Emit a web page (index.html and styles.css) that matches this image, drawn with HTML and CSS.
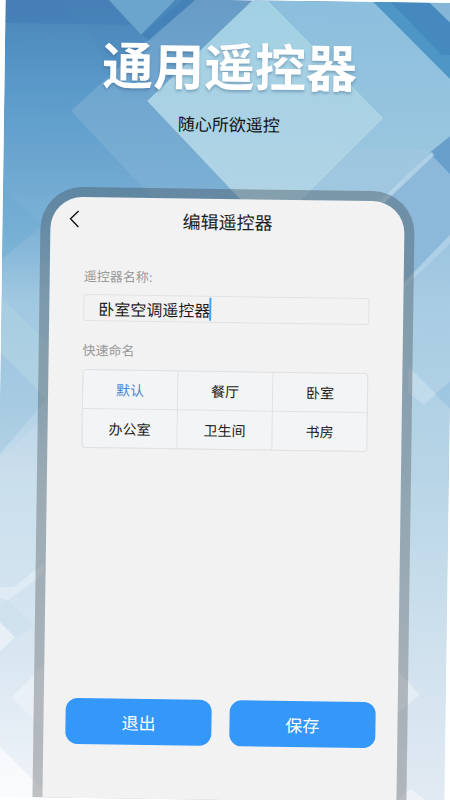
FILE: index.html
```
<!DOCTYPE html>
<html lang="zh-CN">

<head>
    <meta charset="UTF-8">
    <meta name="viewport" content="width=device-width, initial-scale=1.0">
    <title>通用遥控器</title>
    <link rel="stylesheet" href="styles.css">
</head>

<body>
    <div class="poster">
        <svg class="backdrop" viewBox="0 0 450 800" preserveAspectRatio="xMidYMid slice" aria-hidden="true">
            <defs>
                <linearGradient id="sky" x1="0" y1="0" x2="0" y2="1">
                    <stop offset="0" stop-color="#4a84b8" />
                    <stop offset="0.12" stop-color="#5b9bca" />
                    <stop offset="0.28" stop-color="#7ab0d5" />
                    <stop offset="0.38" stop-color="#a0c8e1" />
                    <stop offset="0.5" stop-color="#aed0e5" />
                    <stop offset="0.6" stop-color="#c9dfec" />
                    <stop offset="0.82" stop-color="#d8e6f1" />
                    <stop offset="1" stop-color="#f1f4f9" />
                </linearGradient>
                <linearGradient id="rightSky" x1="0" y1="0" x2="0" y2="1">
                    <stop offset="0" stop-color="#93bfdc" />
                    <stop offset="0.2" stop-color="#a8cce3" />
                    <stop offset="0.45" stop-color="#b6d4e6" />
                    <stop offset="0.75" stop-color="#cfe1ed" />
                    <stop offset="1" stop-color="#e2eaf3" />
                </linearGradient>
                <linearGradient id="diamond" x1="0" y1="0" x2="0" y2="1">
                    <stop offset="0" stop-color="#a2d0e3" />
                    <stop offset="1" stop-color="#b1d4e6" />
                </linearGradient>
                <linearGradient id="band" x1="0" y1="0" x2="0" y2="1">
                    <stop offset="0" stop-color="#8bbfdd" />
                    <stop offset="1" stop-color="#9fc8df" />
                </linearGradient>
            </defs>
            <rect width="450" height="800" fill="url(#sky)" />
            <rect x="376" y="180" width="74" height="620" fill="url(#rightSky)" />
            <!-- top left -->
            <path d="M0 0H100L134 34L128 26H0Z" fill="#3b73ae" opacity=".4" />
            <path d="M52 0H102L136 36L148 100H120L86 36Z" fill="#4a86ba" opacity=".25" />
            <path d="M102 0H178L136 36Z" fill="#6ba5cd" />
            <path d="M170 0H190L145 42L136 36Z" fill="#427fb6" opacity=".8" />
            <!-- diamonds -->
            <path d="M190 0H247L143 102L246 208H158L67 113L145 40Z" fill="#85b4d6" opacity=".5" />
            <path d="M263 0H368L450 80V136L374 208H290L380 116Z" fill="url(#band)" />
            <path d="M247 0H263L380 116L290 208H246L143 102Z" fill="url(#diamond)" />
            <path d="M350 147L439 147L374 208H290Z" fill="#a6c8e0" opacity=".4" />
            <path d="M368 0H450V80Z" fill="#4d96c6" />
            <path d="M385 0H424L450 26V52L437 52Z" fill="#4586bb" opacity=".8" />
            <path d="M424 0H450V24Z" fill="#85b6d7" />
            <path d="M426 150L450 130V176Z" fill="#699fcb" />
            <path d="M374 208L426 150L450 174V230L400 284L376 250Z" fill="#8cb9da" />
            <path d="M370 206L428 149L431 152L376 206Z" fill="#c5dfef" opacity=".6" />
            <path d="M398 284L450 229V238L398 290Z" fill="#b9d7e9" opacity=".6" />
            <!-- side facets -->
            <path d="M0 192L40 228L0 262Z" fill="#6aaad0" opacity=".4" />
            <path d="M0 300L46 345V400L0 355Z" fill="#b4d4e2" opacity=".4" />
            <path d="M0 356L46 402L0 458Z" fill="#98c1dd" opacity=".4" />
            <path d="M0 462L40 424V480H0Z" fill="#cfdfed" opacity=".3" />
            <path d="M408 364L436 391L424 402L408 390Z" fill="#c8dfed" opacity=".7" />
            <path d="M450 378L435 391L450 405Z" fill="#95c0dd" opacity=".6" />
            <path d="M400 408L450 458V480H400Z" fill="#b6d4e6" opacity=".3" />
            <path d="M0 590H16L46 566V576L10 604L0 600Z" fill="#e6f0f6" opacity=".6" />
            <path d="M10 602L38 630L0 650V612Z" fill="#c8dcea" opacity=".35" />
            <path d="M0 622L18 640L4 654H0Z" fill="#edf3f8" opacity=".8" />
            <path d="M16 700L60 655V744Z" fill="#f0f4fa" opacity=".6" />
            <path d="M0 745L56 800H0Z" fill="#fff" opacity=".6" />
            <path d="M400 667L424 692L400 712Z" fill="#edf3f8" opacity=".6" />
            <path d="M400 800L416 786L434 800Z" fill="#fff" opacity=".4" />
        </svg>

        <header class="intro">
            <h1>通用遥控器</h1>
            <p>随心所欲遥控</p>
        </header>

        <main class="phone">
            <div class="screen">
                <div class="topbar">
                    <button class="back" type="button" aria-label="返回">
                        <svg width="12" height="20" viewBox="0 0 12 20" aria-hidden="true">
                            <path d="M10 2L2 10L10 18" />
                        </svg>
                    </button>
                    <h2>编辑遥控器</h2>
                </div>

                <form class="editor">
                    <label for="remoteName">遥控器名称:</label>
                    <div class="field">
                        <input id="remoteName" type="text" value="卧室空调遥控器">
                        <span class="caret"></span>
                    </div>

                    <p class="caption" id="quickLabel">快速命名</p>
                    <div class="names" role="group" aria-labelledby="quickLabel">
                        <button class="name selected" type="button">默认</button>
                        <button class="name" type="button">餐厅</button>
                        <button class="name" type="button">卧室</button>
                        <button class="name" type="button">办公室</button>
                        <button class="name" type="button">卫生间</button>
                        <button class="name" type="button">书房</button>
                    </div>
                </form>

                <div class="actions">
                    <button class="action" type="button">退出</button>
                    <button class="action" type="button">保存</button>
                </div>
            </div>
        </main>
    </div>

    <script>
        const nameInput = document.getElementById('remoteName');
        const nameButtons = document.querySelectorAll('.name');

        nameButtons.forEach(button => {
            button.addEventListener('click', () => {
                nameButtons.forEach(other => other.classList.remove('selected'));
                button.classList.add('selected');
                nameInput.value = button.textContent + '空调遥控器';
            });
        });
    </script>
</body>

</html>
```
FILE: styles.css
```
* {
    box-sizing: border-box;
}

body {
    margin: 0;
    background-color: #fff;
    font-family: "Noto Sans CJK SC", "Noto Sans", sans-serif;
    color: #1c1c1c;
    overflow: hidden;
}

h1,
h2,
p {
    margin: 0;
}

button,
input {
    font: inherit;
    color: inherit;
    margin: 0;
    padding: 0;
    border: none;
    background: none;
}

button {
    cursor: pointer;
}

.poster {
    position: relative;
    display: flex;
    flex-direction: column;
    min-height: 100vh;
    overflow: hidden;
    transform: rotate(0.8deg);
}

.backdrop {
    position: absolute;
    width: 100%;
    height: 100%;
}

.intro {
    position: relative;
    padding-top: 34px;
    text-align: center;
}

.intro h1 {
    font-size: 51px;
    line-height: 60px;
    font-weight: 700;
    color: #fff;
    text-shadow: 0 2px 3px rgba(50, 90, 130, 0.4);
}

.intro p {
    margin-top: 17px;
    font-size: 17px;
    line-height: 26px;
    color: #111;
}

.phone {
    position: relative;
    flex: 1;
    display: flex;
    margin: 52px 38px 0;
    padding: 10px 10px 0;
    border-radius: 42px 42px 0 0;
    background: linear-gradient(rgba(70, 85, 95, 0.42), rgba(105, 105, 105, 0.4));
}

.screen {
    flex: 1;
    display: flex;
    flex-direction: column;
    border-radius: 32px 32px 0 0;
    background-color: #f2f2f2;
}

.topbar {
    display: grid;
    grid-template-columns: 48px 1fr 48px;
    align-items: center;
    height: 44px;
}

.topbar h2 {
    font-size: 18px;
    line-height: 24px;
    font-weight: 400;
    text-align: center;
}

.back {
    display: flex;
    justify-content: center;
}

.back svg {
    fill: none;
    stroke: #111;
    stroke-width: 1.4;
}

.editor {
    padding: 25px 34px 0;
}

.editor label,
.caption {
    display: block;
    font-size: 13px;
    line-height: 20px;
    color: #999;
}

.field {
    position: relative;
    margin-top: 8px;
    font-size: 16px;
}

.field input {
    display: block;
    width: 100%;
    height: 27px;
    padding: 0 14px;
    border: 1px solid #e0e2e4;
    border-radius: 3px;
    outline: none;
}

/* sits right after the seventh character */
.caret {
    position: absolute;
    top: 2px;
    bottom: 2px;
    left: calc(14px + 7em);
    width: 2px;
    background-color: #42a0f0;
}

.caption {
    margin-top: 19px;
}

.names {
    display: grid;
    grid-template-columns: repeat(3, 1fr);
    gap: 1px;
    margin-top: 9px;
    border: 1px solid #e0e2e4;
    border-radius: 4px;
    background-color: #e0e2e4;
    overflow: hidden;
}

.name {
    height: 38px;
    font-size: 14px;
    background-color: #f3f4f5;
}

.name.selected {
    color: #4a86cf;
}

.actions {
    display: flex;
    gap: 18px;
    margin-top: auto;
    padding: 20px 22px 54px;
}

.action {
    flex: 1;
    height: 46px;
    border-radius: 12px;
    font-size: 17px;
    color: #fff;
    background-color: #3498fb;
}
```
